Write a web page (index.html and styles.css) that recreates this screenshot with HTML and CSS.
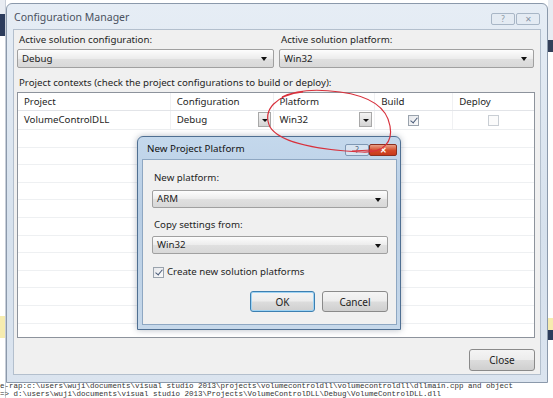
FILE: index.html
```html
<!DOCTYPE html>
<html lang="en">
<head>
  <meta charset="UTF-8">
  <title>Configuration Manager</title>
  <link rel="stylesheet" href="styles.css">
</head>
<body>
  <div class="strip strip-left"></div>
  <div class="strip strip-right"></div>
  <div class="console">
    <div>e-rap:c:\users\wuji\documents\visual studio 2013\projects\volumecontroldll\volumecontroldll\dllmain.cpp and object</div>
    <div>=&gt; d:\users\wuji\documents\visual studio 2013\Projects\VolumeControlDLL\Debug\VolumeControlDLL.dll</div>
  </div>

  <div class="win">
    <div class="win-title">
      <span>Configuration Manager</span>
      <div class="caps">
        <span class="cap">?</span>
        <span class="cap cap-x">&#x2715;</span>
      </div>
    </div>
    <div class="client">
      <div class="pair">
        <div class="field">
          <label>Active solution configuration:</label>
          <div class="combo">Debug<i class="arrow"></i></div>
        </div>
        <div class="field">
          <label>Active solution platform:</label>
          <div class="combo">Win32<i class="arrow"></i></div>
        </div>
      </div>
      <label class="ctx">Project contexts (check the project configurations to build or deploy):</label>
      <div class="grid">
        <div class="grow head">
          <div class="c c1">Project</div>
          <div class="c c2">Configuration</div>
          <div class="c c3">Platform</div>
          <div class="c c4">Build</div>
          <div class="c c5">Deploy</div>
        </div>
        <div class="grow">
          <div class="c c1">VolumeControlDLL</div>
          <div class="c c2">Debug<i class="drop"></i></div>
          <div class="c c3">Win32<i class="drop"></i></div>
          <div class="c c4 mid"><span class="chk on"></span></div>
          <div class="c c5 mid"><span class="chk off"></span></div>
        </div>
        <div class="empty"></div>
      </div>
      <div class="foot">
        <button class="btn close">Close</button>
      </div>
    </div>
  </div>

  <div class="dlg">
    <div class="dlg-title">
      <span>New Project Platform</span>
      <div class="caps">
        <span class="cap cap-help">?</span>
        <span class="cap cap-red">&#x2715;</span>
      </div>
    </div>
    <div class="dlg-client">
      <label>New platform:</label>
      <div class="combo small">ARM<i class="arrow"></i></div>
      <label class="gap">Copy settings from:</label>
      <div class="combo small">Win32<i class="arrow"></i></div>
      <div class="check-row"><span class="chk on"></span>Create new solution platforms</div>
      <div class="btns">
        <button class="btn ok">OK</button>
        <button class="btn">Cancel</button>
      </div>
    </div>
  </div>

  <svg class="ink" width="553" height="398" viewBox="0 0 553 398">
    <path d="M303 92 C276 95 262 110 270 127 C280 143 320 150 362 152 C384 153 393 142 390 126 C387 108 370 96 340 92 C318 89 296 90 282 97"
          fill="none" stroke="#d8313c" stroke-width="1.2"/>
    <path d="M352 151 L372 150" stroke="#d8313c" stroke-width="1.2"/>
  </svg>
</body>
</html>
```

FILE: styles.css
```css
body {
  margin: 0;
  width: 553px;
  height: 398px;
  overflow: hidden;
  position: relative;
  background: #fff;
  font-family: "Noto Sans", sans-serif;
  font-size: 9.7px;
  color: #1e1e1e;
}

/* things behind the dialogs */
.strip { position: absolute; top: 0; height: 398px; width: 6px; }
.strip-left {
  left: 0;
  background: linear-gradient(#e8ecf2 0, #e8ecf2 14px, #2c3c5c 14px, #2c3c5c 36px, #fff 36px, #fff 316px, #f6ecb0 316px, #f6ecb0 338px, #fff 338px);
  border-right: 1px solid #c8ced8;
  box-sizing: border-box;
}
.strip-right {
  right: 0;
  width: 5px;
  background: linear-gradient(#e8ecf2 0, #e8ecf2 40px, #33405a 40px, #33405a 52px, #fff 52px, #fff 318px, #f6ecb0 318px, #f6ecb0 330px, #2c3c5c 330px, #2c3c5c 340px, #fff 340px);
}
.console {
  position: absolute;
  left: 0; top: 383px;
  width: 553px;
  font-family: "Liberation Mono", monospace;
  font-size: 7.5px;
  line-height: 7.5px;
  color: #333;
  white-space: nowrap;
}

/* main window */
.win {
  position: absolute;
  left: 6px; top: 3px;
  width: 542px; height: 380px;
  box-sizing: border-box;
  border: 1px solid #8b99ab;
  border-radius: 6px 6px 0 0;
  background: linear-gradient(#e6edf5, #d6e1ed 60%, #dbe4ef);
  padding: 0 7px 7px;
  display: flex;
  flex-direction: column;
}
.win-title {
  height: 25px;
  display: flex;
  align-items: center;
  justify-content: space-between;
  font-size: 10.5px;
  color: #4a5260;
}
.caps { display: flex; gap: 1px; align-self: flex-start; margin-top: 9px; }
.cap {
  width: 22px; height: 10px;
  border: 1px solid #a8b6c6;
  border-radius: 2px;
  background: #e4ebf3;
  font-size: 8px;
  line-height: 10px;
  text-align: center;
  color: #8894a3;
}
.client {
  flex: 1;
  background: #f0f0f0;
  border: 1px solid #b3bfcd;
  margin: 0 -1px;
  padding: 3px 3px 0;
  display: flex;
  flex-direction: column;
}
.pair { display: flex; gap: 5px; }
.field { display: flex; flex-direction: column; }
.field:first-child { width: 257px; }
.field:last-child { width: 255px; }
label { display: block; line-height: 14px; padding-left: 2px; }
.combo {
  position: relative;
  margin-top: 2px;
  height: 19px;
  box-sizing: border-box;
  border: 1px solid #a0a0a0;
  border-radius: 2px;
  background: linear-gradient(#fdfdfd, #ececec 50%, #e0e0e0 51%, #d8d8d8);
  line-height: 17px;
  padding-left: 4px;
}
.arrow {
  position: absolute;
  right: 6px; top: 7px;
  border-left: 3px solid transparent;
  border-right: 3px solid transparent;
  border-top: 4px solid #111;
}
.ctx { margin-top: 8px; }

/* project grid */
.grid {
  margin-top: 2px;
  height: 246px;
  box-sizing: border-box;
  border: 1px solid #8d939c;
  background: #fff;
  display: flex;
  flex-direction: column;
  margin-right: 2px;
}
.grow { display: flex; height: 19px; border-bottom: 1px solid #eceef0; box-sizing: border-box; }
.grow.head { height: 18px; border-bottom-color: #e2e4e8; }
.c {
  position: relative;
  box-sizing: border-box;
  padding-left: 6px;
  line-height: 18px;
  border-right: 1px solid #f0f1f3;
}
.c1 { width: 153px; }
.c2 { width: 103px; }
.c3 { width: 102px; }
.c4 { width: 78px; }
.c5 { width: 81px; border-right: none; }
.mid { display: flex; align-items: center; justify-content: center; padding-left: 0; }
.drop {
  position: absolute;
  right: 2px; top: 1px;
  width: 13px; height: 15px;
  box-sizing: border-box;
  border: 1px solid #a8a8a8;
  background: linear-gradient(#f4f4f4, #d4d4d4);
}
.drop::after {
  content: "";
  position: absolute;
  left: 3px; top: 6px;
  border-left: 3px solid transparent;
  border-right: 3px solid transparent;
  border-top: 3px solid #111;
}
.chk {
  position: relative;
  display: inline-block;
  width: 11px; height: 11px;
  box-sizing: border-box;
  border: 1px solid #9aa3ad;
  background: linear-gradient(135deg, #e6e8ec, #fafafa);
}
.c5 .chk { border-color: #c9ced4; background: #fbfbfb; }
.chk.on::after {
  content: "";
  position: absolute;
  left: 3px; top: 0;
  width: 3px; height: 6px;
  border: solid #4a5b78;
  border-width: 0 1.5px 1.5px 0;
  transform: rotate(40deg);
}
.empty {
  flex: 1;
  background: repeating-linear-gradient(#fff 0, #fff 16.6px, #eef0f2 16.6px, #eef0f2 17.6px);
}
.foot { display: flex; justify-content: flex-end; padding: 11px 2px 0 0; }
.btn {
  width: 66px; height: 22px;
  box-sizing: border-box;
  border: 1px solid #8a8a8a;
  border-radius: 3px;
  background: linear-gradient(#f4f4f4, #ececec 48%, #dcdcdc 52%, #cfcfcf);
  font-family: inherit;
  font-size: 10px;
  color: #1e1e1e;
  padding: 0;
}

/* new project platform dialog */
.dlg {
  position: absolute;
  left: 137px; top: 136px;
  width: 264px; height: 194px;
  box-sizing: border-box;
  border: 1px solid #4f6f92;
  border-radius: 6px 6px 0 0;
  background: linear-gradient(#c4d8ec, #b7cde4 40%, #c6d8ea);
  padding: 0 3px 4px 4px;
  display: flex;
  flex-direction: column;
  box-shadow: 0 0 6px rgba(40, 60, 90, 0.35);
}
.dlg-title {
  height: 22px;
  display: flex;
  align-items: center;
  justify-content: space-between;
  padding-left: 5px;
  font-size: 9.8px;
  color: #111;
}
.dlg-title .caps { margin-top: 7px; gap: 0; }
.cap-help { width: 22px; background: #d7e4f1; border-color: #7f98b4; color: #4e6178; }
.cap-red {
  width: 26px;
  background: linear-gradient(#e9a087, #d34a28 55%, #c8391a);
  border-color: #8a3020;
  color: #fff;
  font-weight: bold;
}
.dlg-client {
  flex: 1;
  background: #f0f0f0;
  border: 1px solid #8ea7c2;
  padding: 11px 8px 0 9px;
}
.dlg-client .combo { margin-top: 5px; height: 18px; line-height: 16px; }
.dlg-client .combo .arrow { top: 7px; }
.dlg-client .gap { margin-top: 10px; }
.dlg-client .combo + .gap + .combo { margin-top: 4px; }
.check-row {
  margin-top: 11px;
  display: flex;
  align-items: center;
  gap: 3px;
  padding-left: 1px;
  line-height: 14px;
}
.btns { display: flex; justify-content: flex-end; gap: 7px; margin-top: 12px; }
.btns .btn { height: 21px; }
.btn.ok { width: 65px; border-color: #3c7fb1; box-shadow: inset 0 0 0 1px #9fd3f3; }

.ink { position: absolute; left: 0; top: 0; pointer-events: none; }
```
